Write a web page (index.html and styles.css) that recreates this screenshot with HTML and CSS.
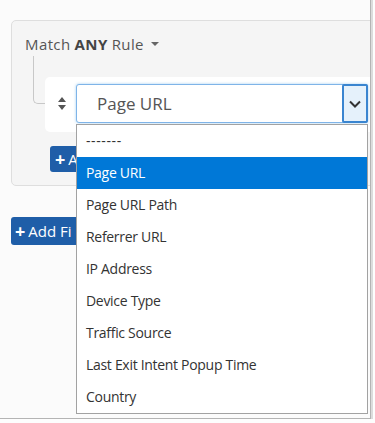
FILE: index.html
```html
<!DOCTYPE html>
<html>
<head>
<meta charset="utf-8">
<link rel="stylesheet" href="styles.css">
</head>
<body>
<div class="frame">
  <div class="card">
    <div class="match">Match <b>ANY</b> Rule <span class="caret"></span></div>
    <div class="tree">
      <div class="connector"></div>
      <div class="rule">
        <svg class="sort" width="8" height="13" viewBox="0 0 8 13"><path d="M4 0 L8 5 L0 5 Z M0 8 L8 8 L4 13 Z" fill="#555"/></svg>
        <div class="select">
          <span class="select-text">Page URL</span>
          <span class="select-btn"><svg width="12" height="8" viewBox="0 0 12 8"><path d="M1 1.5 L6 6.5 L11 1.5" fill="none" stroke="#333" stroke-width="2"/></svg></span>
        </div>
      </div>
    </div>
    <div class="btn add-rule"><span class="plus">+</span><span class="btn-label">A</span></div>
  </div>
  <div class="btn add-filter"><span class="plus">+</span><span class="btn-label">Add Fi</span></div>

  <ul class="dropdown">
    <li class="sep">-------</li>
    <li class="active">Page URL</li>
    <li>Page URL Path</li>
    <li>Referrer URL</li>
    <li>IP Address</li>
    <li>Device Type</li>
    <li>Traffic Source</li>
    <li>Last Exit Intent Popup Time</li>
    <li>Country</li>
  </ul>
</div>
</body>
</html>
```
FILE: styles.css
```css
html, body {
  margin: 0;
  padding: 0;
  background: #fdfdfd;
}
body {
  font-family: "Open Sans", "Noto Sans", sans-serif;
}
.frame {
  position: relative;
  width: 370px;
  height: 418px;
  background: #fbfbfb;
  border-right: 1px solid #b4b4b4;
  border-bottom: 1px solid #b4b4b4;
  box-shadow: 1px 1px 0 1px #dcdcdc;
  overflow: hidden;
  display: flex;
  flex-direction: column;
  align-items: flex-start;
}
.card {
  box-sizing: border-box;
  margin: 20px 0 0 11px;
  width: 380px;
  flex: 0 0 auto;
  height: 166px;
  background: #f5f5f5;
  border: 1px solid #dedede;
  border-radius: 5px;
  padding: 13px 0 0 13px;
}
.match {
  font-size: 15px;
  line-height: 20px;
  letter-spacing: 0.4px;
  color: #555;
  display: flex;
  align-items: center;
  gap: 4px;
}
.match b {
  font-weight: 700;
  color: #444;
}
.caret {
  display: inline-block;
  width: 0;
  height: 0;
  margin-left: 3px;
  border-left: 4px solid transparent;
  border-right: 4px solid transparent;
  border-top: 4px solid #666;
}
.tree {
  display: flex;
  align-items: flex-start;
  margin-top: 2px;
  margin-left: 8px;
}
.connector {
  width: 11px;
  height: 47px;
  border-left: 1px solid #c8c8c8;
  border-bottom: 1px solid #c8c8c8;
  border-bottom-left-radius: 5px;
}
.rule {
  margin-top: 21px;
  flex: 1;
  background: #fff;
  border-radius: 5px;
  padding: 7px 0 9px 13px;
  display: flex;
  align-items: center;
  gap: 10px;
}
.sort {
  display: block;
}
.select {
  box-sizing: border-box;
  width: 292px;
  height: 39px;
  border: 1px solid #7fb4e8;
  border-radius: 3px;
  box-shadow: 0 0 3px rgba(102, 175, 233, 0.6);
  background: #fff;
  display: flex;
  align-items: center;
  justify-content: space-between;
}
.select-text {
  font-size: 17px;
  color: #555;
  padding-left: 20px;
}
.select-btn {
  box-sizing: border-box;
  width: 26px;
  height: 39px;
  margin-right: -1px;
  background: #e5f1fb;
  border: 2px solid #3a85d0;
  border-radius: 2px;
  display: flex;
  align-items: center;
  justify-content: center;
}
.btn {
  box-sizing: border-box;
  display: flex;
  align-items: center;
  background: #1f5ea8;
  color: #fff;
  font-size: 15px;
  border-radius: 3px;
  white-space: nowrap;
}
.plus {
  font-weight: 700;
  font-size: 18px;
  margin-right: 3px;
}
.add-rule {
  margin: 14px 0 0 25px;
  height: 26px;
  width: 60px;
  padding: 0 0 0 5px;
}
.add-filter {
  margin: 31px 0 0 11px;
  height: 28px;
  width: 100px;
  padding: 0 0 0 4px;
}
.dropdown {
  position: absolute;
  left: 76px;
  top: 124px;
  width: 290px;
  margin: 0;
  padding: 0;
  list-style: none;
  background: #fff;
  border: 1px solid #a2a2a2;
  font-family: "Open Sans", "Noto Sans", sans-serif;
  font-size: 14px;
  letter-spacing: -0.3px;
  color: #333;
}
.dropdown li {
  height: 32px;
  line-height: 32px;
  padding-left: 9px;
}
.dropdown li.sep {
  letter-spacing: 0.6px;
}
.dropdown li.active {
  background: #0078d7;
  color: #fff;
}
```
